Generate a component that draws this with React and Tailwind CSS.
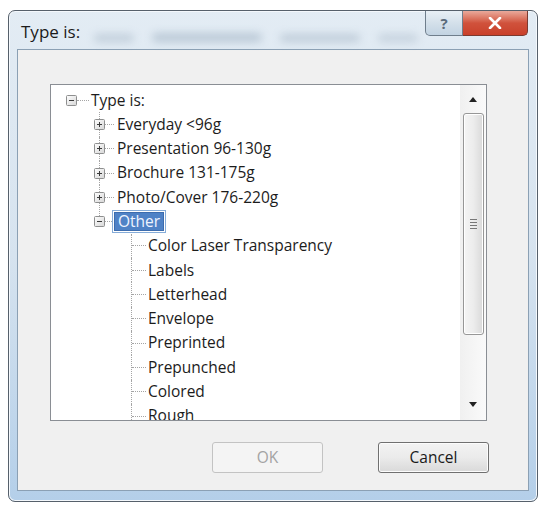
import React from "react";

const FONT = { fontFamily: '"Open Sans", "Noto Sans", Arial, sans-serif' };

function Expander({ open }) {
  return (
    <svg width="11" height="11" viewBox="0 0 11 11" className="shrink-0">
      <defs>
        <linearGradient id={open ? "eg1" : "eg2"} x1="0" y1="0" x2="1" y2="1">
          <stop offset="0" stopColor="#ffffff" />
          <stop offset="1" stopColor="#d6d6d6" />
        </linearGradient>
      </defs>
      <rect x="0.5" y="0.5" width="10" height="10" rx="1" fill={`url(#${open ? "eg1" : "eg2"})`} stroke="#8e8f8f" />
      <line x1="3" y1="5.5" x2="8" y2="5.5" stroke="#3a3a3a" strokeWidth="1" />
      {!open && <line x1="5.5" y1="3" x2="5.5" y2="8" stroke="#3a3a3a" strokeWidth="1" />}
    </svg>
  );
}

const dot = "border-dotted border-[#a5a5a5]";

function RootRow({ label }) {
  return (
    <div className="flex h-[24.3px] items-center">
      <div className="w-[15px] shrink-0" />
      <Expander open />
      <div className={`w-[12px] border-t ${dot}`} />
      <div className="w-[2px]" />
      <span>{label}</span>
    </div>
  );
}

function ChildRow({ label, last, open, selected }) {
  return (
    <div className="flex h-[24.3px] items-center">
      <div className="w-[43px] shrink-0" />
      <div className="flex h-full w-[11px] flex-col items-center">
        <div className={`w-0 flex-1 border-l ${dot}`} />
        <Expander open={open} />
        <div className={`w-0 flex-1 ${last ? "" : `border-l ${dot}`}`} />
      </div>
      {selected ? (
        <>
          <div className={`w-[7px] border-t ${dot}`} />
          <div className="flex h-[23px] items-center border border-[#86acd8] p-[1px]">
            <div className="flex h-full items-center border border-[#3c6cae] bg-[#4f82c6] px-[3px] text-[#eef4ff]">
              {label}
            </div>
          </div>
        </>
      ) : (
        <>
          <div className={`w-[9px] border-t ${dot}`} />
          <div className="w-[3px]" />
          <span className="whitespace-nowrap">{label}</span>
        </>
      )}
    </div>
  );
}

function LeafRow({ label }) {
  return (
    <div className="flex h-[24.3px] items-center">
      <div className="w-[80px] shrink-0" />
      <div className={`h-full w-0 border-l ${dot}`} />
      <div className={`w-[14px] border-t ${dot}`} />
      <div className="w-[2px]" />
      <span className="whitespace-nowrap">{label}</span>
    </div>
  );
}

function Scrollbar() {
  return (
    <div className="flex w-[26px] shrink-0 flex-col items-center bg-gradient-to-r from-[#f0f0f0] to-[#fafafa] pb-[1px]">
      <div className="flex h-[28px] w-full items-center justify-center">
        <svg width="8" height="5" viewBox="0 0 8 5">
          <path d="M0 5 L4 0 L8 5 Z" fill="#222" />
        </svg>
      </div>
      <div className="flex h-[222px] w-[21px] items-center justify-center rounded-[3px] border border-[#979797] bg-gradient-to-r from-[#f5f5f5] via-[#ececec] to-[#d9d9d9] shadow-[inset_0_0_0_1px_#ffffff]">
        <div className="flex flex-col gap-[2px]">
          <div className="h-[1px] w-[7px] bg-[#777]" />
          <div className="h-[1px] w-[7px] bg-[#777]" />
          <div className="h-[1px] w-[7px] bg-[#777]" />
          <div className="h-[1px] w-[7px] bg-[#777]" />
        </div>
      </div>
      <div className="flex-1" />
      <div className="flex h-[30px] w-full items-center justify-center">
        <svg width="8" height="5" viewBox="0 0 8 5">
          <path d="M0 0 L4 5 L8 0 Z" fill="#222" />
        </svg>
      </div>
    </div>
  );
}

export default function App() {
  const leaves = [
    "Color Laser Transparency",
    "Labels",
    "Letterhead",
    "Envelope",
    "Preprinted",
    "Prepunched",
    "Colored",
    "Rough",
  ];
  return (
    <div className="h-[506px] w-[543px] bg-white pl-[8px] pt-[10px]" style={FONT}>
      <div className="flex h-[492px] w-[530px] flex-col rounded-[7px] border border-[#56606b] bg-gradient-to-b from-[#e3ecf4] via-[#d6e3ef] to-[#b4cfe9] px-[8px] pb-[10px] shadow-[inset_0_0_0_1px_#f4f8fc]">
        {/* title bar */}
        <div className="flex h-[38px] items-start">
          <div className="pl-[4px] pt-[10px] text-[17px] leading-[22px] text-[#1b1b1b]">Type is:</div>
          <div className="flex flex-1 items-center gap-[18px] pl-[14px] pt-[22px] opacity-40">
            <div className="h-[8px] w-[40px] rounded-full bg-[#8fa2b4] blur-[4px]" />
            <div className="h-[9px] w-[110px] rounded-full bg-[#7f95aa] blur-[4px]" />
            <div className="h-[8px] w-[80px] rounded-full bg-[#8a9db0] blur-[4px]" />
            <div className="h-[8px] w-[40px] rounded-full bg-[#9aabbc] blur-[4px]" />
          </div>
          <div className="flex h-[25px] items-stretch pr-[1px]">
            <div className="flex w-[38px] items-center justify-center rounded-bl-[5px] border border-t-0 border-[#6f7e8c] bg-gradient-to-b from-[#e8eff5] via-[#d4e0ea] to-[#c2d3e2] text-[15px] font-bold text-[#5a6a7a]">
              ?
            </div>
            <div className="flex w-[65px] items-center justify-center rounded-br-[5px] border border-l-0 border-t-0 border-[#7a3a30] bg-gradient-to-b from-[#e9a99b] via-[#d0523c] to-[#c9402a]">
              <svg width="14" height="12" viewBox="0 0 14 12">
                <path d="M2 1 L12 11 M12 1 L2 11" stroke="#ffffff" strokeWidth="2.6" strokeLinecap="round" />
              </svg>
            </div>
          </div>
        </div>
        {/* client */}
        <div className="flex flex-1 flex-col border border-[#8ba0b4] bg-[#f0f0f0]">
          <div className="ml-[32px] mt-[34px] flex h-[337px] w-[437px] border border-[#8a8e94] bg-white">
            <div className="flex-1 overflow-hidden pt-[3px] text-[15.5px] text-[#1c1c1c]">
              <RootRow label="Type is:" />
              <ChildRow label="Everyday <96g" />
              <ChildRow label="Presentation 96-130g" />
              <ChildRow label="Brochure 131-175g" />
              <ChildRow label="Photo/Cover 176-220g" />
              <ChildRow label="Other" last open selected />
              {leaves.map((l) => (
                <LeafRow key={l} label={l} />
              ))}
            </div>
            <Scrollbar />
          </div>
          <div className="mt-[21px] flex gap-[55px] pl-[194px] text-[15.5px]">
            <div className="flex h-[31px] w-[111px] items-center justify-center rounded-[3px] border border-[#c3c3c3] bg-[#f4f4f4] text-[#a3a3a3]">
              OK
            </div>
            <div className="flex h-[31px] w-[111px] items-center justify-center rounded-[3px] border border-[#707070] bg-gradient-to-b from-[#f3f3f3] via-[#ebebeb] to-[#d9d9d9] text-[#1a1a1a] shadow-[inset_0_0_0_1px_#fcfcfc]">
              Cancel
            </div>
          </div>
        </div>
      </div>
    </div>
  );
}
